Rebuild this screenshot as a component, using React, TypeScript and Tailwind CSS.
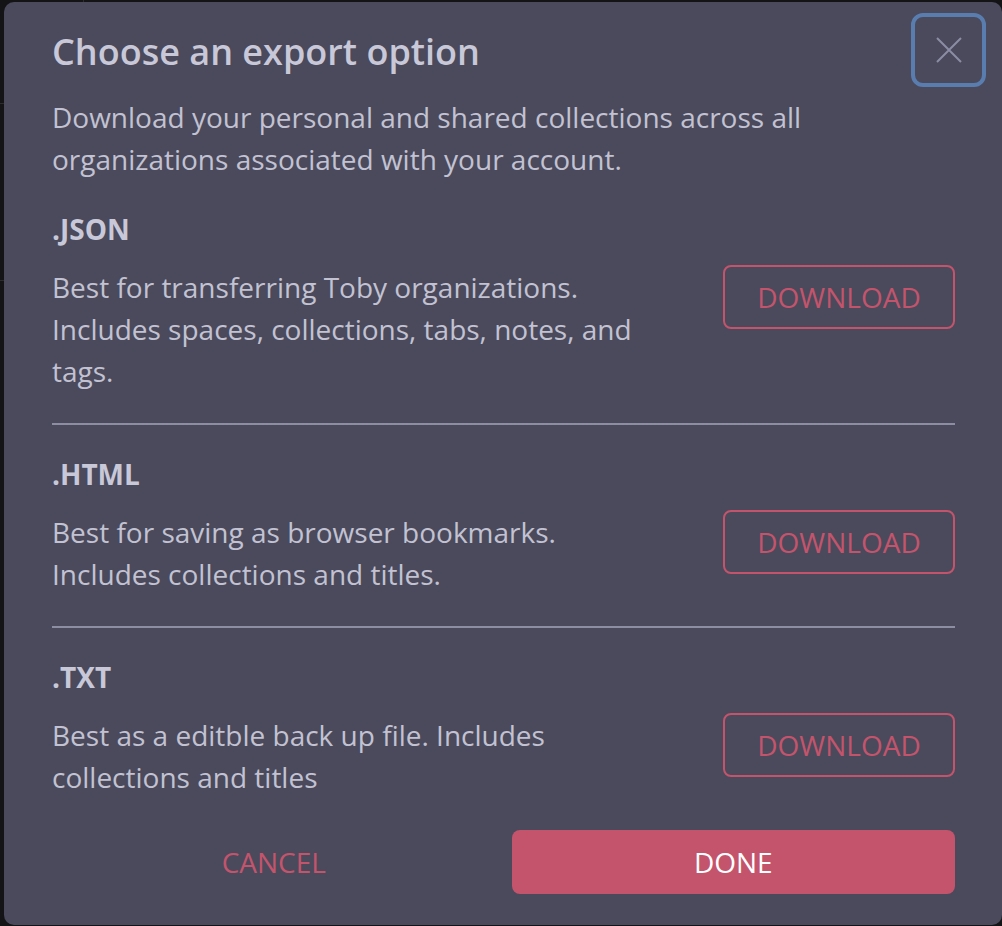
import React from "react";

const font = { fontFamily: '"Open Sans", "Noto Sans", sans-serif' };

function Section({
  title,
  desc,
  last,
}: {
  title: string;
  desc: string;
  last?: boolean;
}) {
  return (
    <div
      className={`pt-[28px] ${
        last ? "pb-[32px]" : "pb-[31px] border-b-2 border-[#8e8ea2]"
      }`}
    >
      <div className="text-[28px] leading-[42px] font-bold text-[#c8c8d8]">{title}</div>
      <div className="mt-[16px] flex items-start justify-between">
        <p className="w-[600px] text-[28px] leading-[42px] text-[#c2c2d2]">{desc}</p>
        <button className="-mt-[1px] w-[232px] h-[64px] rounded-[8px] border-2 border-[#c4546c] text-[#c4546c] text-[28px] leading-none">
          DOWNLOAD
        </button>
      </div>
    </div>
  );
}

export default function App() {
  return (
    <div className="relative w-full h-[926px] bg-[#141416] overflow-hidden" style={font}>
      <div className="absolute left-[83px] top-0 w-px h-[3px] bg-[#2c2c30]" />
      <div className="absolute left-0 top-[103px] w-[4px] h-px bg-[#2c2c30]" />
      <div className="absolute left-0 top-[280px] w-[4px] h-px bg-[#2c2c30]" />
      <div className="relative ml-[4px] mt-[2px] w-[998px] h-[923px] rounded-[10px] bg-[#4a4a5c] pl-[48px] pr-[47px] pt-[26px]">
        <h1 className="text-[36px] leading-[48px] font-semibold text-[#c8c8d8]">
          Choose an export option
        </h1>
        <p className="mt-[20px] text-[28px] leading-[42px] text-[#c2c2d2] w-[800px]">
          Download your personal and shared collections across all organizations associated with your account.
        </p>
        <Section
          title=".JSON"
          desc="Best for transferring Toby organizations. Includes spaces, collections, tabs, notes, and tags."
        />
        <Section
          title=".HTML"
          desc="Best for saving as browser bookmarks. Includes collections and titles."
        />
        <Section
          last
          title=".TXT"
          desc="Best as a editble back up file. Includes collections and titles"
        />
        <div className="grid grid-cols-2 gap-[16px]">
          <button className="h-[64px] text-[28px] text-[#c4546c]">CANCEL</button>
          <button className="h-[64px] rounded-[8px] bg-[#c4546c] text-[28px] text-white">
            DONE
          </button>
        </div>
        <button className="absolute left-[907px] top-[11px] w-[75px] h-[74px] rounded-[12px] border-4 border-[#5a7db0] flex items-center justify-center">
          <svg width="26" height="26" viewBox="0 0 26 26" fill="none">
            <path d="M1 1L25 25M25 1L1 25" stroke="#8c8ca4" strokeWidth="2" />
          </svg>
        </button>
      </div>
    </div>
  );
}
